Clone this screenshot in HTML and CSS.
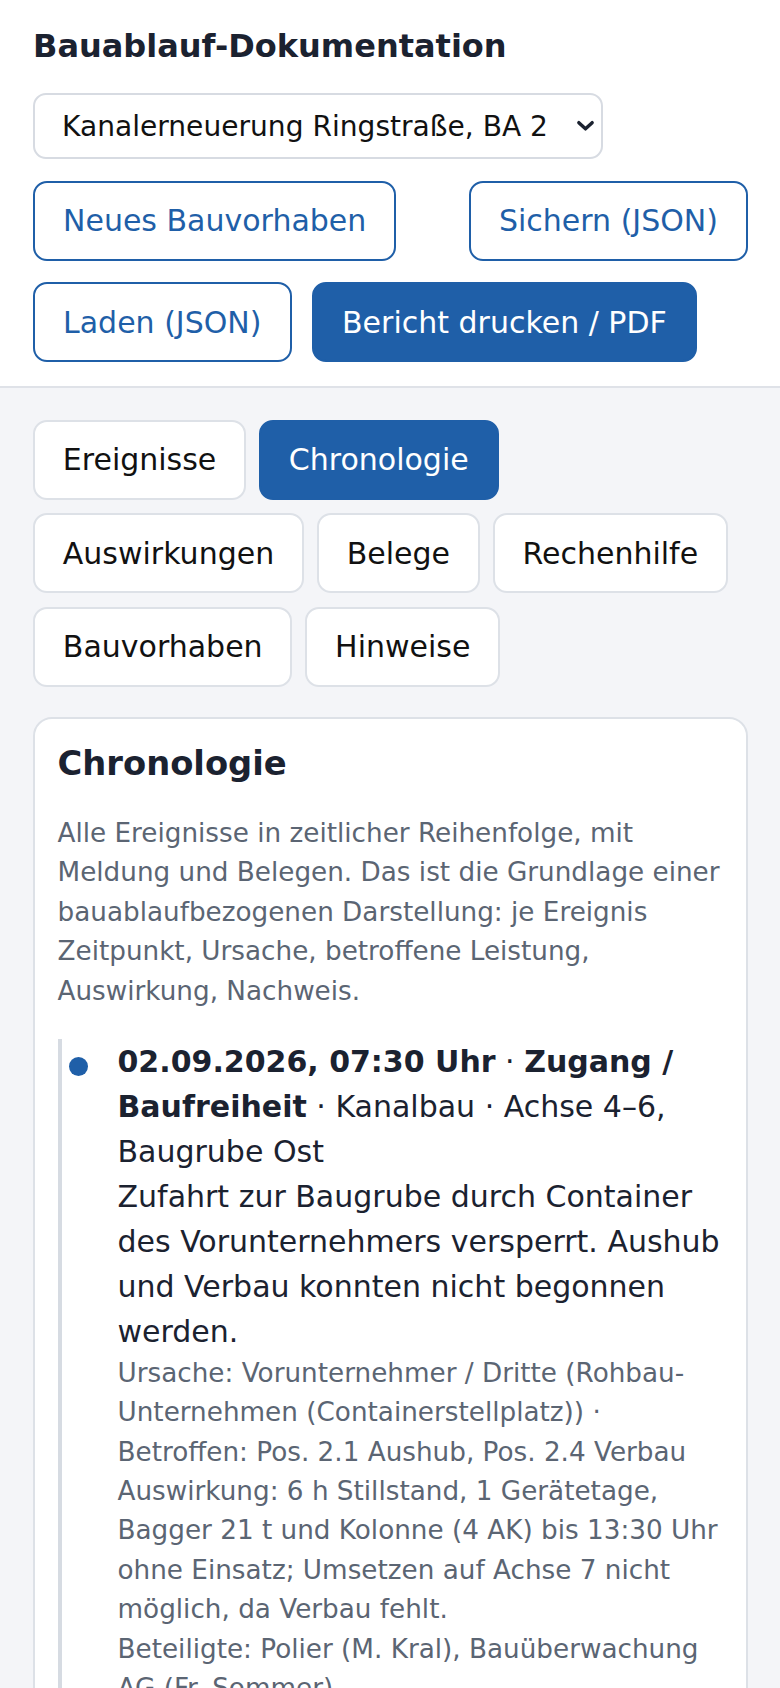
FILE: index.html
```html
<!DOCTYPE html>
<html lang="de">
<head>
<meta charset="utf-8">
<title>Bauablauf-Dokumentation</title>
<link rel="stylesheet" href="styles.css">
</head>
<body>
<header class="topbar">
  <h1 class="app-title">Bauablauf-Dokumentation</h1>
  <div class="select-wrap">
    <select class="project-select">
      <option>Kanalerneuerung Ringstraße, BA 2</option>
    </select>
    <svg class="select-chevron" viewBox="0 0 20 12" aria-hidden="true"><path d="M3 2.5 L10 9 L17 2.5" fill="none" stroke="#1b2230" stroke-width="3.6" stroke-linecap="round" stroke-linejoin="round"/></svg>
  </div>
  <div class="actions">
    <button class="btn btn-outline">Neues Bauvorhaben</button>
    <button class="btn btn-outline btn-push">Sichern (JSON)</button>
    <button class="btn btn-outline">Laden (JSON)</button>
    <button class="btn btn-primary">Bericht drucken / PDF</button>
  </div>
</header>

<main class="content">
  <nav class="tabs">
    <button class="tab">Ereignisse</button>
    <button class="tab tab-active">Chronologie</button>
    <button class="tab">Auswirkungen</button>
    <button class="tab">Belege</button>
    <button class="tab">Rechenhilfe</button>
    <button class="tab">Bauvorhaben</button>
    <button class="tab">Hinweise</button>
  </nav>

  <section class="card">
    <h2 class="card-title">Chronologie</h2>
    <p class="card-intro">Alle Ereignisse in zeitlicher Reihenfolge, mit Meldung und Belegen. Das ist die Grundlage einer bauablaufbezogenen Darstellung: je Ereignis Zeitpunkt, Ursache, betroffene Leistung, Auswirkung, Nachweis.</p>

    <ol class="timeline">
      <li class="tl-item">
        <span class="tl-dot"></span>
        <div class="tl-head"><strong>02.09.2026, 07:30 Uhr</strong> · <strong>Zugang / Baufreiheit</strong> · Kanalbau · Achse 4–6, Baugrube Ost</div>
        <div class="tl-text">Zufahrt zur Baugrube durch Container des Vorunternehmers versperrt. Aushub und Verbau konnten nicht begonnen werden.</div>
        <div class="tl-meta">Ursache: Vorunternehmer / Dritte (Rohbau-Unternehmen (Containerstellplatz)) · Betroffen: Pos. 2.1 Aushub, Pos. 2.4 Verbau</div>
        <div class="tl-meta">Auswirkung: 6 h Stillstand, 1 Gerätetage, Bagger 21 t und Kolonne (4 AK) bis 13:30 Uhr ohne Einsatz; Umsetzen auf Achse 7 nicht möglich, da Verbau fehlt.</div>
        <div class="tl-meta">Beteiligte: Polier (M. Kral), Bauüberwachung AG (Fr. Sommer)</div>
      </li>
    </ol>
  </section>
</main>
</body>
</html>
```
FILE: styles.css
```css
* { box-sizing: border-box; }

html, body {
  margin: 0;
  padding: 0;
}

body {
  font-family: "DejaVu Sans", "Noto Sans", sans-serif;
  color: #1b2230;
  background: #f4f5f8;
}

/* Header */
.topbar {
  background: #ffffff;
  padding: 27px 32px 24px 33px;
  border-bottom: 2px solid #dfe2e8;
}

.app-title {
  margin: 0 0 28px;
  font-size: 32px;
  line-height: 1.2;
  font-weight: 700;
  color: #1b2230;
}

.select-wrap {
  position: relative;
  width: 570px;
}

.project-select {
  -webkit-appearance: none;
  appearance: none;
  display: block;
  width: 570px;
  height: 66px;
  margin: 0;
  padding: 0 36px 0 27px;
  font-family: inherit;
  font-size: 28.1px;
  color: #111111;
  background: #ffffff;
  border: 2px solid #d7dbe2;
  border-radius: 13px;
}

.select-chevron {
  position: absolute;
  top: 27px;
  right: 8px;
  width: 19px;
  height: 12px;
  pointer-events: none;
}

.actions {
  display: flex;
  flex-wrap: wrap;
  gap: 21.5px 20.5px;
  margin-top: 21.5px;
}

.btn {
  font-family: inherit;
  font-size: 30px;
  line-height: normal;
  padding: 20.5px 28px;
  border-radius: 14px;
  border: 2px solid #1f5fa8;
  cursor: pointer;
}

.btn-outline {
  background: #ffffff;
  color: #1f5fa8;
}

.btn-primary {
  background: #1f5fa8;
  color: #ffffff;
}

.btn-push {
  margin-left: auto;
}

/* Main */
.content {
  padding: 31.6px 32px 0 33px;
}

.tabs {
  display: flex;
  flex-wrap: wrap;
  gap: 13.3px 12.9px;
}

.tab {
  font-family: inherit;
  font-size: 30px;
  line-height: normal;
  padding: 20.5px 27.8px;
  color: #111111;
  background: #ffffff;
  border: 2px solid #dde1e7;
  border-radius: 14px;
  cursor: pointer;
}

.tab-active {
  background: #1f5fa8;
  border-color: #1f5fa8;
  color: #ffffff;
}

.card {
  margin-top: 30px;
  background: #ffffff;
  border: 2px solid #dde1e7;
  border-radius: 19px;
  padding: 25px 22.5px 30px;
}

.card-title {
  margin: 0;
  font-size: 33.75px;
  line-height: 1.2;
  font-weight: 700;
  color: #1b2230;
}

.card-intro {
  margin: 30px 0 0;
  font-size: 26.25px;
  line-height: 1.5;
  color: #5b6573;
}

.timeline {
  list-style: none;
  margin: 28px 0 0;
  padding: 0;
  border-left: 4px solid #d6dbe2;
}

.tl-item {
  position: relative;
  padding-left: 56px;
  font-size: 30px;
  line-height: 1.5;
  color: #1b2230;
}

.tl-dot {
  position: absolute;
  left: 7px;
  top: 18px;
  width: 19px;
  height: 19px;
  border-radius: 50%;
  background: #1f5fa8;
}

.tl-head strong {
  font-weight: 700;
}

.tl-meta {
  font-size: 26.25px;
  line-height: 1.5;
  color: #5b6573;
}
```
